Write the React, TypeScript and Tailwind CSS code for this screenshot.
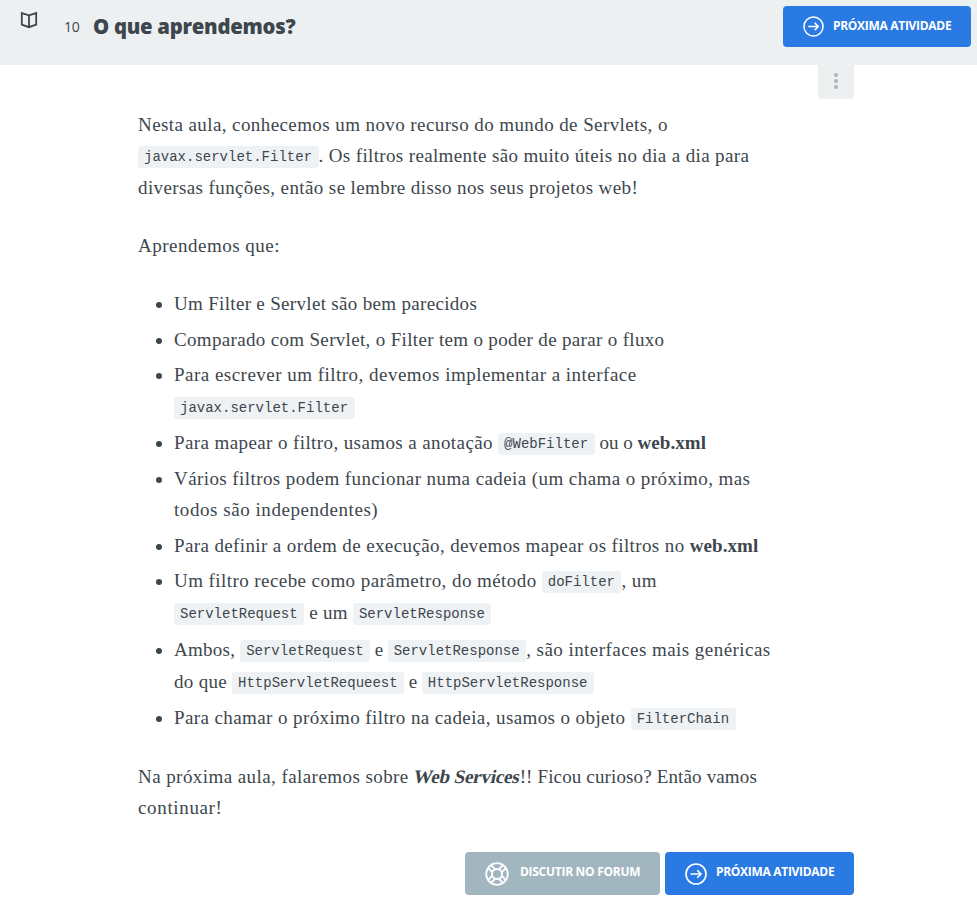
import type { ReactNode } from "react";

function Code({ children }: { children: ReactNode }) {
  return (
    <code className="inline-block h-[22px] rounded-[3px] bg-[#eff2f5] pr-[6.5px] pl-[6px] align-[1px] font-['Liberation_Mono',monospace] text-[14px] leading-[22px] tracking-normal text-[#3d464d]">
      {children}
    </code>
  );
}

function Line({ children, className = "" }: { children: ReactNode; className?: string }) {
  return <span className={`flex h-[31px] items-baseline whitespace-pre leading-[31px] ${className}`}><span className="block h-[31px]">{children}</span></span>;
}

function Item({ children, className = "" }: { children: ReactNode; className?: string }) {
  return (
    <li className={`flex ${className}`}>
      <span className="mt-[14px] mr-[12px] ml-[18px] size-[6px] shrink-0 rounded-full bg-[#3d464d]" />
      <div>{children}</div>
    </li>
  );
}

function ArrowCircle({ className }: { className: string }) {
  return (
    <svg viewBox="0 0 22 22" className={className} fill="none" stroke="currentColor" strokeWidth="1.6">
      <circle cx="11" cy="11" r="10" />
      <path d="M5.5 11h10.4M12.2 7.2 16 11l-3.8 3.8" />
    </svg>
  );
}

function Lifebuoy() {
  return (
    <svg viewBox="0 0 24 24" className="size-[24px] shrink-0" fill="none" stroke="currentColor" strokeWidth="1.8">
      <circle cx="12" cy="12" r="10.8" />
      <circle cx="12" cy="12" r="5" />
      <path d="M7 10 3.3 6.2M10 7 6.2 3.3M14 7l3.8-3.7M17 10l3.7-3.8M17 14l3.7 3.8M14 17l3.8 3.7M10 17l-3.8 3.7M7 14l-3.7 3.8" />
    </svg>
  );
}

export default function App() {
  return (
    <div className="h-[916px] w-[977px] overflow-hidden bg-white font-['Open_Sans',sans-serif] text-[#3d464d]">
      <header className="flex h-[65px] items-start bg-[#ecf0f1]">
        <svg viewBox="0 0 18 18" className="mt-[11px] ml-[20px] size-[18px]" fill="none" stroke="currentColor" strokeWidth="1.8">
          <path d="M1.8 2.1 9 4.4l7.2-2.3v11.5L9 16.2l-7.2-2.6zM9 4.4v11.8" />
        </svg>
        <span className="mt-[17px] ml-[26px] w-[29px] text-[14px] leading-[20px] tracking-[-0.3px]">10</span>
        <h1 className="mt-[11px] text-[20.3px] leading-[30px] font-extrabold tracking-[-0.25px] whitespace-nowrap">O que aprendemos?</h1>
        <button className="mt-[6px] mr-[6px] ml-auto flex h-[41px] w-[188px] items-center rounded-[4px] bg-[#2a7ae4] pl-[20px] text-white">
          <ArrowCircle className="size-[21px] shrink-0" />
          <span className="ml-[9px] pb-px text-[12px] font-bold tracking-[-0.3px] whitespace-nowrap">PRÓXIMA ATIVIDADE</span>
        </button>
      </header>
      <div className="ml-[818px] flex h-[34px] w-[36px] flex-col items-center justify-center gap-[2px] rounded-b-[4px] bg-[#ecf0f1] pb-[2px]">
        <i className="size-[4px] rounded-full bg-[#a9b6bd]" />
        <i className="size-[4px] rounded-full bg-[#a9b6bd]" />
        <i className="size-[4px] rounded-full bg-[#a9b6bd]" />
      </div>
      <main className="mt-[10px] ml-[138px] w-[716px] font-['Liberation_Serif',serif] text-[19px]">
        <p>
          <Line className="tracking-[0.41px]">Nesta aula, conhecemos um novo recurso do mundo de Servlets, o</Line>
          <Line className="tracking-[0.36px]"><Code>javax.servlet.Filter</Code>. Os filtros realmente são muito úteis no dia a dia para</Line>
          <Line className="mt-px tracking-[0.39px]">diversas funções, então se lembre disso nos seus projetos web!</Line>
        </p>
        <p className="mt-[27px]">
          <Line className="tracking-[0.5px]">Aprendemos que:</Line>
        </p>
        <ul className="mt-[27px]">
          <Item><Line className="tracking-[0.32px]">Um Filter e Servlet são bem parecidos</Line></Item>
          <Item className="mt-[5px]"><Line className="tracking-[0.33px]">Comparado com Servlet, o Filter tem o poder de parar o fluxo</Line></Item>
          <Item className="mt-[4px]">
            <Line className="tracking-[0.48px]">Para escrever um filtro, devemos implementar a interface</Line>
            <Line className="mt-px"><Code>javax.servlet.Filter</Code></Line>
          </Item>
          <Item className="mt-[5px]"><Line className="tracking-[0.4px]">Para mapear o filtro, usamos a anotação <Code>@WebFilter</Code><span className="tracking-[0px]"> ou o </span><b className="tracking-[0.1px]">web.xml</b></Line></Item>
          <Item className="mt-[5px]">
            <Line className="tracking-[0.42px]">Vários filtros podem funcionar numa cadeia (um chama o próximo, mas</Line>
            <Line className="tracking-[0.55px]">todos são independentes)</Line>
          </Item>
          <Item className="mt-[5px]"><Line className="tracking-[0.38px]">Para definir a ordem de execução, devemos mapear os filtros no <b className="tracking-[0.1px]">web.xml</b></Line></Item>
          <Item className="mt-[4px]">
            <Line className="tracking-[0.43px]">Um filtro recebe como parâmetro, do método <Code>doFilter</Code>, um</Line>
            <Line className="mt-px tracking-[0.3px]"><Code>ServletRequest</Code> e um <Code>ServletResponse</Code></Line>
          </Item>
          <Item className="mt-[6px]">
            <Line className="tracking-[0.45px]"><span className="tracking-[0.25px]">Ambos, </span><Code>ServletRequest</Code><span className="tracking-[-0.2px]"> e </span><Code>ServletResponse</Code>, são interfaces mais genéricas</Line>
            <Line className="mt-px tracking-[0.3px]">do que <Code>HttpServletRequeest</Code><span className="tracking-[-0.1px]"> e </span><Code>HttpServletResponse</Code></Line>
          </Item>
          <Item className="mt-[5px]"><Line className="tracking-[0.4px]">Para chamar o próximo filtro na cadeia, usamos o objeto <Code>FilterChain</Code></Line></Item>
        </ul>
        <p className="mt-[28px]">
          <Line className="tracking-[0.43px]">Na próxima aula, falaremos sobre <b className="inline-block -skew-x-12 tracking-[-0.2px]">Web Services</b><span className="tracking-[0.14px]">!! Ficou curioso? Então vamos</span></Line>
          <Line className="tracking-[0.65px]">continuar!</Line>
        </p>
      </main>
      <footer className="mt-[29px] mr-[123px] flex justify-end gap-[5px] text-white">
        <button className="flex h-[43px] w-[195px] items-center rounded-[4px] bg-[#a2b6c0] pl-[20px]">
          <Lifebuoy />
          <span className="ml-[11px] pb-[3px] text-[12px] font-bold tracking-[-0.28px] whitespace-nowrap">DISCUTIR NO FORUM</span>
        </button>
        <button className="flex h-[43px] w-[189px] items-center rounded-[4px] bg-[#2a7ae4] pl-[20px]">
          <ArrowCircle className="size-[22px] shrink-0" />
          <span className="ml-[9px] pb-[3px] text-[12px] font-bold tracking-[-0.3px] whitespace-nowrap">PRÓXIMA ATIVIDADE</span>
        </button>
      </footer>
    </div>
  );
}
